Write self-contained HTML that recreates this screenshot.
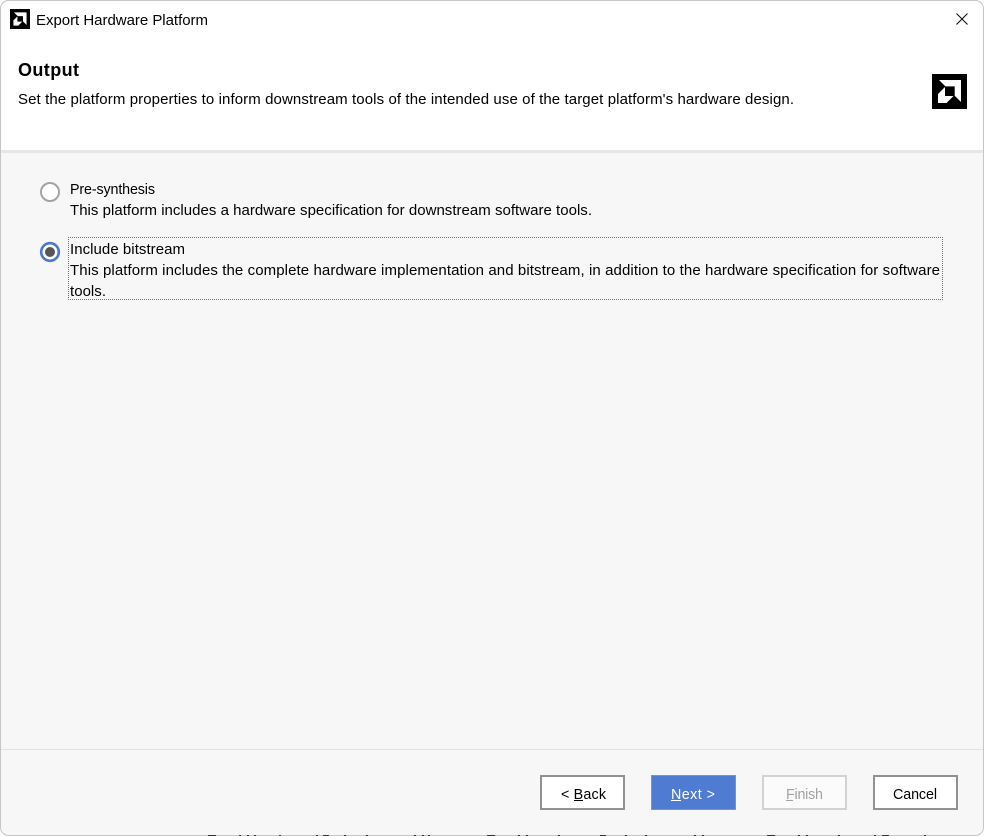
<!DOCTYPE html>
<html lang="en">
<head>
<meta charset="utf-8">
<title>Export Hardware Platform</title>
<style>
html,body{margin:0;padding:0;width:984px;height:836px;overflow:hidden;background:#fff}
svg{display:block;position:absolute;left:0;top:0}
text{font-family:"Liberation Sans",Arial,sans-serif;font-size:15px;fill:#000}
text.s{font-size:14.3px}
.focus{position:absolute;left:68px;top:237px;width:873px;height:61px;border:1px dotted #707070}
</style>
</head>
<body>
<svg width="984" height="836" viewBox="0 0 984 836" xmlns="http://www.w3.org/2000/svg">
  <defs>
    <clipPath id="win"><rect x="0.5" y="0.5" width="983" height="835" rx="8" ry="8"/></clipPath>
    <g id="amd">
      <rect width="35" height="35" fill="#000"/>
      <path d="M7 6H29V28L22.7 21.7V12.4H13.4Z" fill="#fff"/>
      <path d="M6 20L13 13V22H21.5L14.5 29H6Z" fill="#fff"/>
    </g>
  </defs>

  <g clip-path="url(#win)">
    <rect width="984" height="836" fill="#f7f7f7"/>
    <rect width="984" height="150" fill="#fff"/>
    <rect y="150" width="984" height="3" fill="#e6e6e6"/>
    <rect y="749" width="984" height="1" fill="#e3e3e3"/>
  </g>
  <rect x="0.5" y="0.5" width="983" height="835" rx="8" ry="8" fill="none" stroke="#c6c6c6"/>

  <!-- title bar -->
  <use href="#amd" transform="translate(10 9) scale(0.5715)"/>
  <text x="36" y="25" textLength="172" lengthAdjust="spacing">Export Hardware Platform</text>
  <path d="M956.5 13.5L967.5 24.5M967.5 13.5L956.5 24.5" stroke="#111" stroke-width="1.1" fill="none"/>

  <!-- header -->
  <text x="18" y="76" textLength="61" lengthAdjust="spacing" style="font-size:18px;font-weight:700">Output</text>
  <text x="18" y="104" textLength="776" lengthAdjust="spacing">Set the platform properties to inform downstream tools of the intended use of the target platform's hardware design.</text>
  <use href="#amd" x="932" y="74"/>

  <!-- option 1 -->
  <circle cx="50" cy="192" r="9" fill="#fff" stroke="#a3a3a3" stroke-width="2"/>
  <text class="s" x="70" y="194" textLength="85" lengthAdjust="spacing">Pre-synthesis</text>
  <text x="70" y="215" textLength="522" lengthAdjust="spacing">This platform includes a hardware specification for downstream software tools.</text>

  <!-- option 2 -->
  <circle cx="50" cy="252" r="8.8" fill="#fff" stroke="#4a77cf" stroke-width="2.6"/>
  <circle cx="50" cy="252" r="5" fill="#555"/>
  <text x="70" y="254" textLength="115" lengthAdjust="spacing">Include bitstream</text>
  <text x="70" y="275" textLength="870" lengthAdjust="spacing">This platform includes the complete hardware implementation and bitstream, in addition to the hardware specification for software</text>
  <text x="70" y="296" textLength="36" lengthAdjust="spacing">tools.</text>

  <!-- buttons -->
  <rect x="541" y="776" width="83" height="33" fill="#fff" stroke="#919191" stroke-width="2"/>
  <text class="s" x="561" y="799" textLength="45" lengthAdjust="spacing">&lt; Back</text>
  <rect x="574" y="800" width="9" height="1" fill="#000"/>

  <rect x="651.5" y="775.5" width="84" height="34" fill="#4f7bd2" stroke="#6f94dd" stroke-width="1"/>
  <text class="s" x="671" y="799" textLength="44" lengthAdjust="spacing" style="fill:#fff">Next &gt;</text>
  <rect x="671" y="800" width="10" height="1" fill="#fff"/>

  <rect x="763" y="776" width="83" height="33" fill="#fbfbfb" stroke="#d2d2d2" stroke-width="2"/>
  <text class="s" x="786" y="799" textLength="37" lengthAdjust="spacing" style="fill:#a2a2a2">Finish</text>
  <rect x="786" y="800" width="7" height="1" fill="#a2a2a2"/>

  <rect x="874" y="776" width="83" height="33" fill="#fff" stroke="#919191" stroke-width="2"/>
  <text class="s" x="893" y="799" textLength="44" lengthAdjust="spacing">Cancel</text>

  <!-- window content peeking through at the bottom edge -->
  <g fill="#333">
    <rect x="208" y="835" width="8" height="1"/><rect x="239" y="835" width="2" height="1"/><rect x="247" y="835" width="2" height="1"/><rect x="254" y="835" width="2" height="1"/>
    <rect x="279" y="835" width="2" height="1"/><rect x="316" y="835" width="2" height="1"/><rect x="323" y="835" width="6" height="1"/><rect x="344" y="835" width="2" height="1"/>
    <rect x="366" y="835" width="2" height="1"/><rect x="414" y="835" width="2" height="1"/><rect x="422" y="835" width="2" height="1"/><rect x="428" y="835" width="2" height="1"/>
    <rect x="487" y="835" width="8" height="1"/><rect x="518" y="835" width="2" height="1"/><rect x="526" y="835" width="2" height="1"/><rect x="558" y="835" width="2" height="1"/>
    <rect x="600" y="835" width="6" height="1"/><rect x="625" y="835" width="2" height="1"/><rect x="645" y="835" width="2" height="1"/><rect x="694" y="835" width="2" height="1"/><rect x="702" y="835" width="2" height="1"/>
    <rect x="767" y="835" width="8" height="1"/><rect x="798" y="835" width="2" height="1"/><rect x="806" y="835" width="2" height="1"/><rect x="838" y="835" width="2" height="1"/>
    <rect x="874" y="835" width="2" height="1"/><rect x="882" y="835" width="7" height="1"/><rect x="924" y="835" width="2" height="1"/>
  </g>
</svg>
<div class="focus"></div>
</body>
</html>
